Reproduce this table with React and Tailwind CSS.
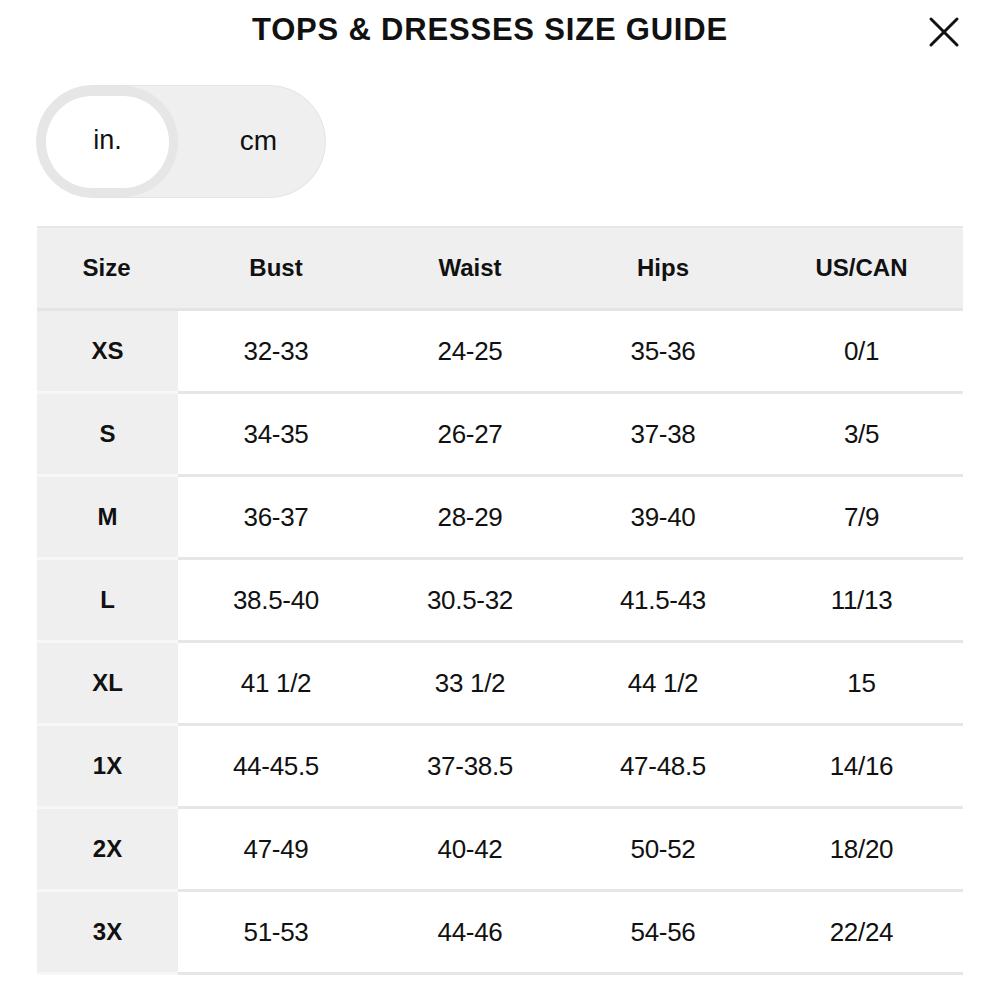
import React from 'react';

const rows = [
  ['XS', '32-33', '24-25', '35-36', '0/1'],
  ['S', '34-35', '26-27', '37-38', '3/5'],
  ['M', '36-37', '28-29', '39-40', '7/9'],
  ['L', '38.5-40', '30.5-32', '41.5-43', '11/13'],
  ['XL', '41 1/2', '33 1/2', '44 1/2', '15'],
  ['1X', '44-45.5', '37-38.5', '47-48.5', '14/16'],
  ['2X', '47-49', '40-42', '50-52', '18/20'],
  ['3X', '51-53', '44-46', '54-56', '22/24'],
];

const headers = ['Bust', 'Waist', 'Hips', 'US/CAN'];
const colW = ['w-[196px]', 'w-[192px]', 'w-[194px]', 'w-[203px]'];

const font = { fontFamily: '"Liberation Sans", Arial, sans-serif' };

export default function App() {
  return (
    <div className="w-[1000px] h-[1000px] bg-white text-[#111]" style={font}>
      <div className="relative flex justify-center pt-[13px] h-[85px]">
        <h1 className="text-[31px] font-bold tracking-[0.8px] leading-[34px] mr-[20px]">
          TOPS &amp; DRESSES SIZE GUIDE
        </h1>
        <button className="absolute left-[928px] top-[16px] w-[32px] h-[32px]">
          <svg viewBox="0 0 32 32" width="32" height="32" fill="none" stroke="#111" strokeWidth="3" strokeLinecap="round">
            <path d="M3 3 L29 29 M29 3 L3 29" />
          </svg>
        </button>
      </div>

      <div className="ml-[36px] w-[290px] h-[113px] rounded-full bg-[#efefef] border border-[#e4e4e4] flex items-center">
        <div className="w-[141px] h-[111px] rounded-full bg-[#e6e6e6] flex items-center justify-center">
          <div className="w-[123px] h-[92px] rounded-full bg-white flex items-center justify-center text-[27px] leading-none pb-[2px]">
            in.
          </div>
        </div>
        <div className="flex-1 flex justify-center text-[28px] leading-none pb-[2px] pl-[14px]">cm</div>
      </div>

      <div className="ml-[37px] mt-[28px] w-[926px] border-t-[2px] border-[#e7e7e7]">
        <div className="flex h-[83px] bg-[#efefef] border-b-[3px] border-[#e4e4e4] font-bold text-[24px]">
          <div className="w-[141px] flex items-center justify-center pr-[2px]">Size</div>
          {headers.map((h, i) => (
            <div key={h} className={`${colW[i]} flex items-center justify-center`}>{h}</div>
          ))}
        </div>
        {rows.map((r) => (
          <div key={r[0]} className="flex h-[83px]">
            <div className="w-[141px] bg-[#efefef] border-b-[3px] border-[#f7f7f7] flex items-center justify-center font-bold text-[24px]">
              {r[0]}
            </div>
            {r.slice(1).map((c, i) => (
              <div key={i} className={`${colW[i]} border-b-[3px] border-[#e6e6e6] flex items-center justify-center text-[26px] tracking-[-0.3px]`}>
                {c}
              </div>
            ))}
          </div>
        ))}
      </div>
    </div>
  );
}
